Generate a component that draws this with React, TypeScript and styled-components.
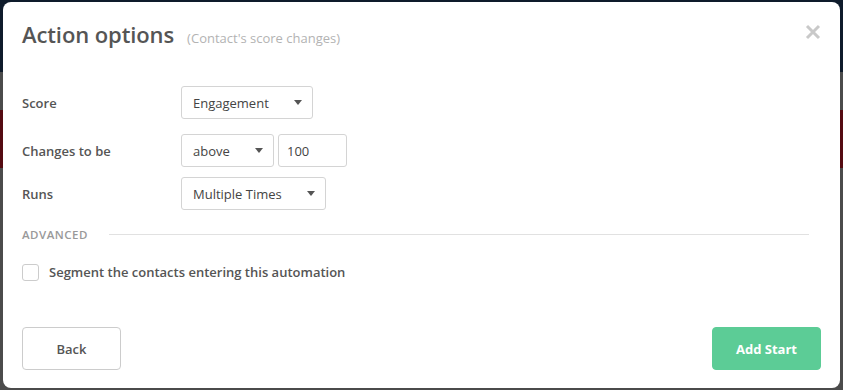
import styled, { createGlobalStyle } from 'styled-components';

const GlobalStyle = createGlobalStyle`
  html, body {
    margin: 0;
    height: 390px;
    overflow: hidden;
  }
  body {
    font-family: 'Open Sans', 'Liberation Sans', sans-serif;
    background: linear-gradient(
      to bottom,
      #0e1b2b 0px,
      #0e1b2b 72px,
      #4b4b4b 72px,
      #4b4b4b 110px,
      #540b11 110px,
      #540b11 168px,
      #4b4b4b 168px
    );
  }
  * {
    box-sizing: border-box;
  }
`;

type Field = {
  label: string;
  spacing: number;
  controls: { kind: 'select' | 'input'; value: string; width: number }[];
};

const fields: Field[] = [
  { label: 'Score', spacing: 15, controls: [{ kind: 'select', value: 'Engagement', width: 132 }] },
  {
    label: 'Changes to be',
    spacing: 10,
    controls: [
      { kind: 'select', value: 'above', width: 93 },
      { kind: 'input', value: '100', width: 69 },
    ],
  },
  { label: 'Runs', spacing: 0, controls: [{ kind: 'select', value: 'Multiple Times', width: 145 }] },
];

const CloseIcon = () => (
  <svg width="16" height="16" viewBox="0 0 16 16">
    <path d="M2 2 L14 14 M14 2 L2 14" stroke="#c9c9c9" strokeWidth="3" strokeLinecap="butt" />
  </svg>
);

const App = () => {
  return (
    <>
      <GlobalStyle />
      <Backdrop>
        <Modal>
          <Header>
            <TitleGroup>
              <Title>Action options</Title>
              <Subtitle>(Contact's score changes)</Subtitle>
            </TitleGroup>
            <CloseButton aria-label="Close">
              <CloseIcon />
            </CloseButton>
          </Header>

          <Form>
            {fields.map((field) => (
              <Row key={field.label} $spacing={field.spacing}>
                <Label>{field.label}</Label>
                <Controls>
                  {field.controls.map((control) =>
                    control.kind === 'select' ? (
                      <Select key={control.value} $width={control.width}>
                        <span>{control.value}</span>
                        <Caret />
                      </Select>
                    ) : (
                      <Input key={control.value} $width={control.width} defaultValue={control.value} />
                    )
                  )}
                </Controls>
              </Row>
            ))}
          </Form>

          <Divider>
            <DividerLabel>Advanced</DividerLabel>
            <DividerLine />
          </Divider>

          <CheckRow>
            <Checkbox />
            <CheckLabel>Segment the contacts entering this automation</CheckLabel>
          </CheckRow>

          <Footer>
            <Button>Back</Button>
            <Button $primary>Add Start</Button>
          </Footer>
        </Modal>
      </Backdrop>
    </>
  );
};

export default App;

const Backdrop = styled.div`
  height: 390px;
  padding: 2px 3px;
`;

const Modal = styled.div`
  width: 837px;
  height: 386px;
  background-color: #ffffff;
  border-radius: 8px;
  padding: 0 19px;
  display: flex;
  flex-direction: column;
`;

const Header = styled.div`
  display: flex;
  justify-content: space-between;
  align-items: flex-start;
  padding-top: 17px;
`;

const TitleGroup = styled.div`
  display: flex;
  align-items: baseline;
  gap: 13px;
`;

const Title = styled.h1`
  margin: 0;
  font-size: 22px;
  line-height: 30px;
  font-weight: 600;
  color: #555555;
  letter-spacing: -0.1px;
`;

const Subtitle = styled.span`
  font-size: 13px;
  font-weight: 400;
  color: #b3b3b3;
`;

const CloseButton = styled.button`
  border: none;
  background: none;
  padding: 0;
  margin-top: 5px;
  width: 16px;
  height: 16px;
  cursor: pointer;
  display: flex;
`;

const Form = styled.div`
  display: flex;
  flex-direction: column;
  margin-top: 37px;
`;

const Row = styled.div<{ $spacing: number }>`
  display: flex;
  align-items: center;
  margin-bottom: ${(props) => props.$spacing}px;
`;

const Label = styled.div`
  width: 159px;
  font-size: 13px;
  font-weight: 600;
  color: #555555;
`;

const Controls = styled.div`
  display: flex;
  gap: 4px;
`;

const Select = styled.div<{ $width: number }>`
  width: ${(props) => props.$width}px;
  height: 33px;
  border: 1px solid #d4d4d4;
  border-radius: 3px;
  padding: 0 10px 0 11px;
  display: flex;
  align-items: center;
  justify-content: space-between;
  font-size: 13px;
  color: #444444;
`;

const Caret = styled.span`
  width: 0;
  height: 0;
  border-left: 4.5px solid transparent;
  border-right: 4.5px solid transparent;
  border-top: 5px solid #555555;
`;

const Input = styled.input<{ $width: number }>`
  width: ${(props) => props.$width}px;
  height: 33px;
  border: 1px solid #d4d4d4;
  border-radius: 3px;
  padding: 0 8px;
  font-family: inherit;
  font-size: 13px;
  color: #444444;
  outline: none;
`;

const Divider = styled.div`
  display: flex;
  align-items: center;
  gap: 21px;
  margin-top: 16px;
  height: 16px;
`;

const DividerLabel = styled.span`
  font-size: 11.5px;
  font-weight: 600;
  text-transform: uppercase;
  color: #999999;
  letter-spacing: 0.5px;
`;

const DividerLine = styled.div`
  width: 700px;
  height: 1px;
  background-color: #e1e1e1;
`;

const CheckRow = styled.div`
  display: flex;
  align-items: center;
  gap: 10px;
  margin-top: 21px;
`;

const Checkbox = styled.span`
  width: 17px;
  height: 17px;
  border: 1px solid #cccccc;
  border-radius: 3px;
  background-color: #ffffff;
`;

const CheckLabel = styled.span`
  font-size: 13px;
  font-weight: 600;
  color: #555555;
`;

const Footer = styled.div`
  margin-top: auto;
  padding-bottom: 18px;
  display: flex;
  justify-content: space-between;
`;

const Button = styled.button<{ $primary?: boolean }>`
  height: 43px;
  min-width: ${(props) => (props.$primary ? 109 : 99)}px;
  border-radius: 4px;
  border: 1px solid ${(props) => (props.$primary ? '#5ccc96' : '#cccccc')};
  background-color: ${(props) => (props.$primary ? '#5ccc96' : '#ffffff')};
  color: ${(props) => (props.$primary ? '#ffffff' : '#555555')};
  font-family: inherit;
  font-size: 13px;
  font-weight: ${(props) => (props.$primary ? 700 : 600)};
  cursor: pointer;
`;
